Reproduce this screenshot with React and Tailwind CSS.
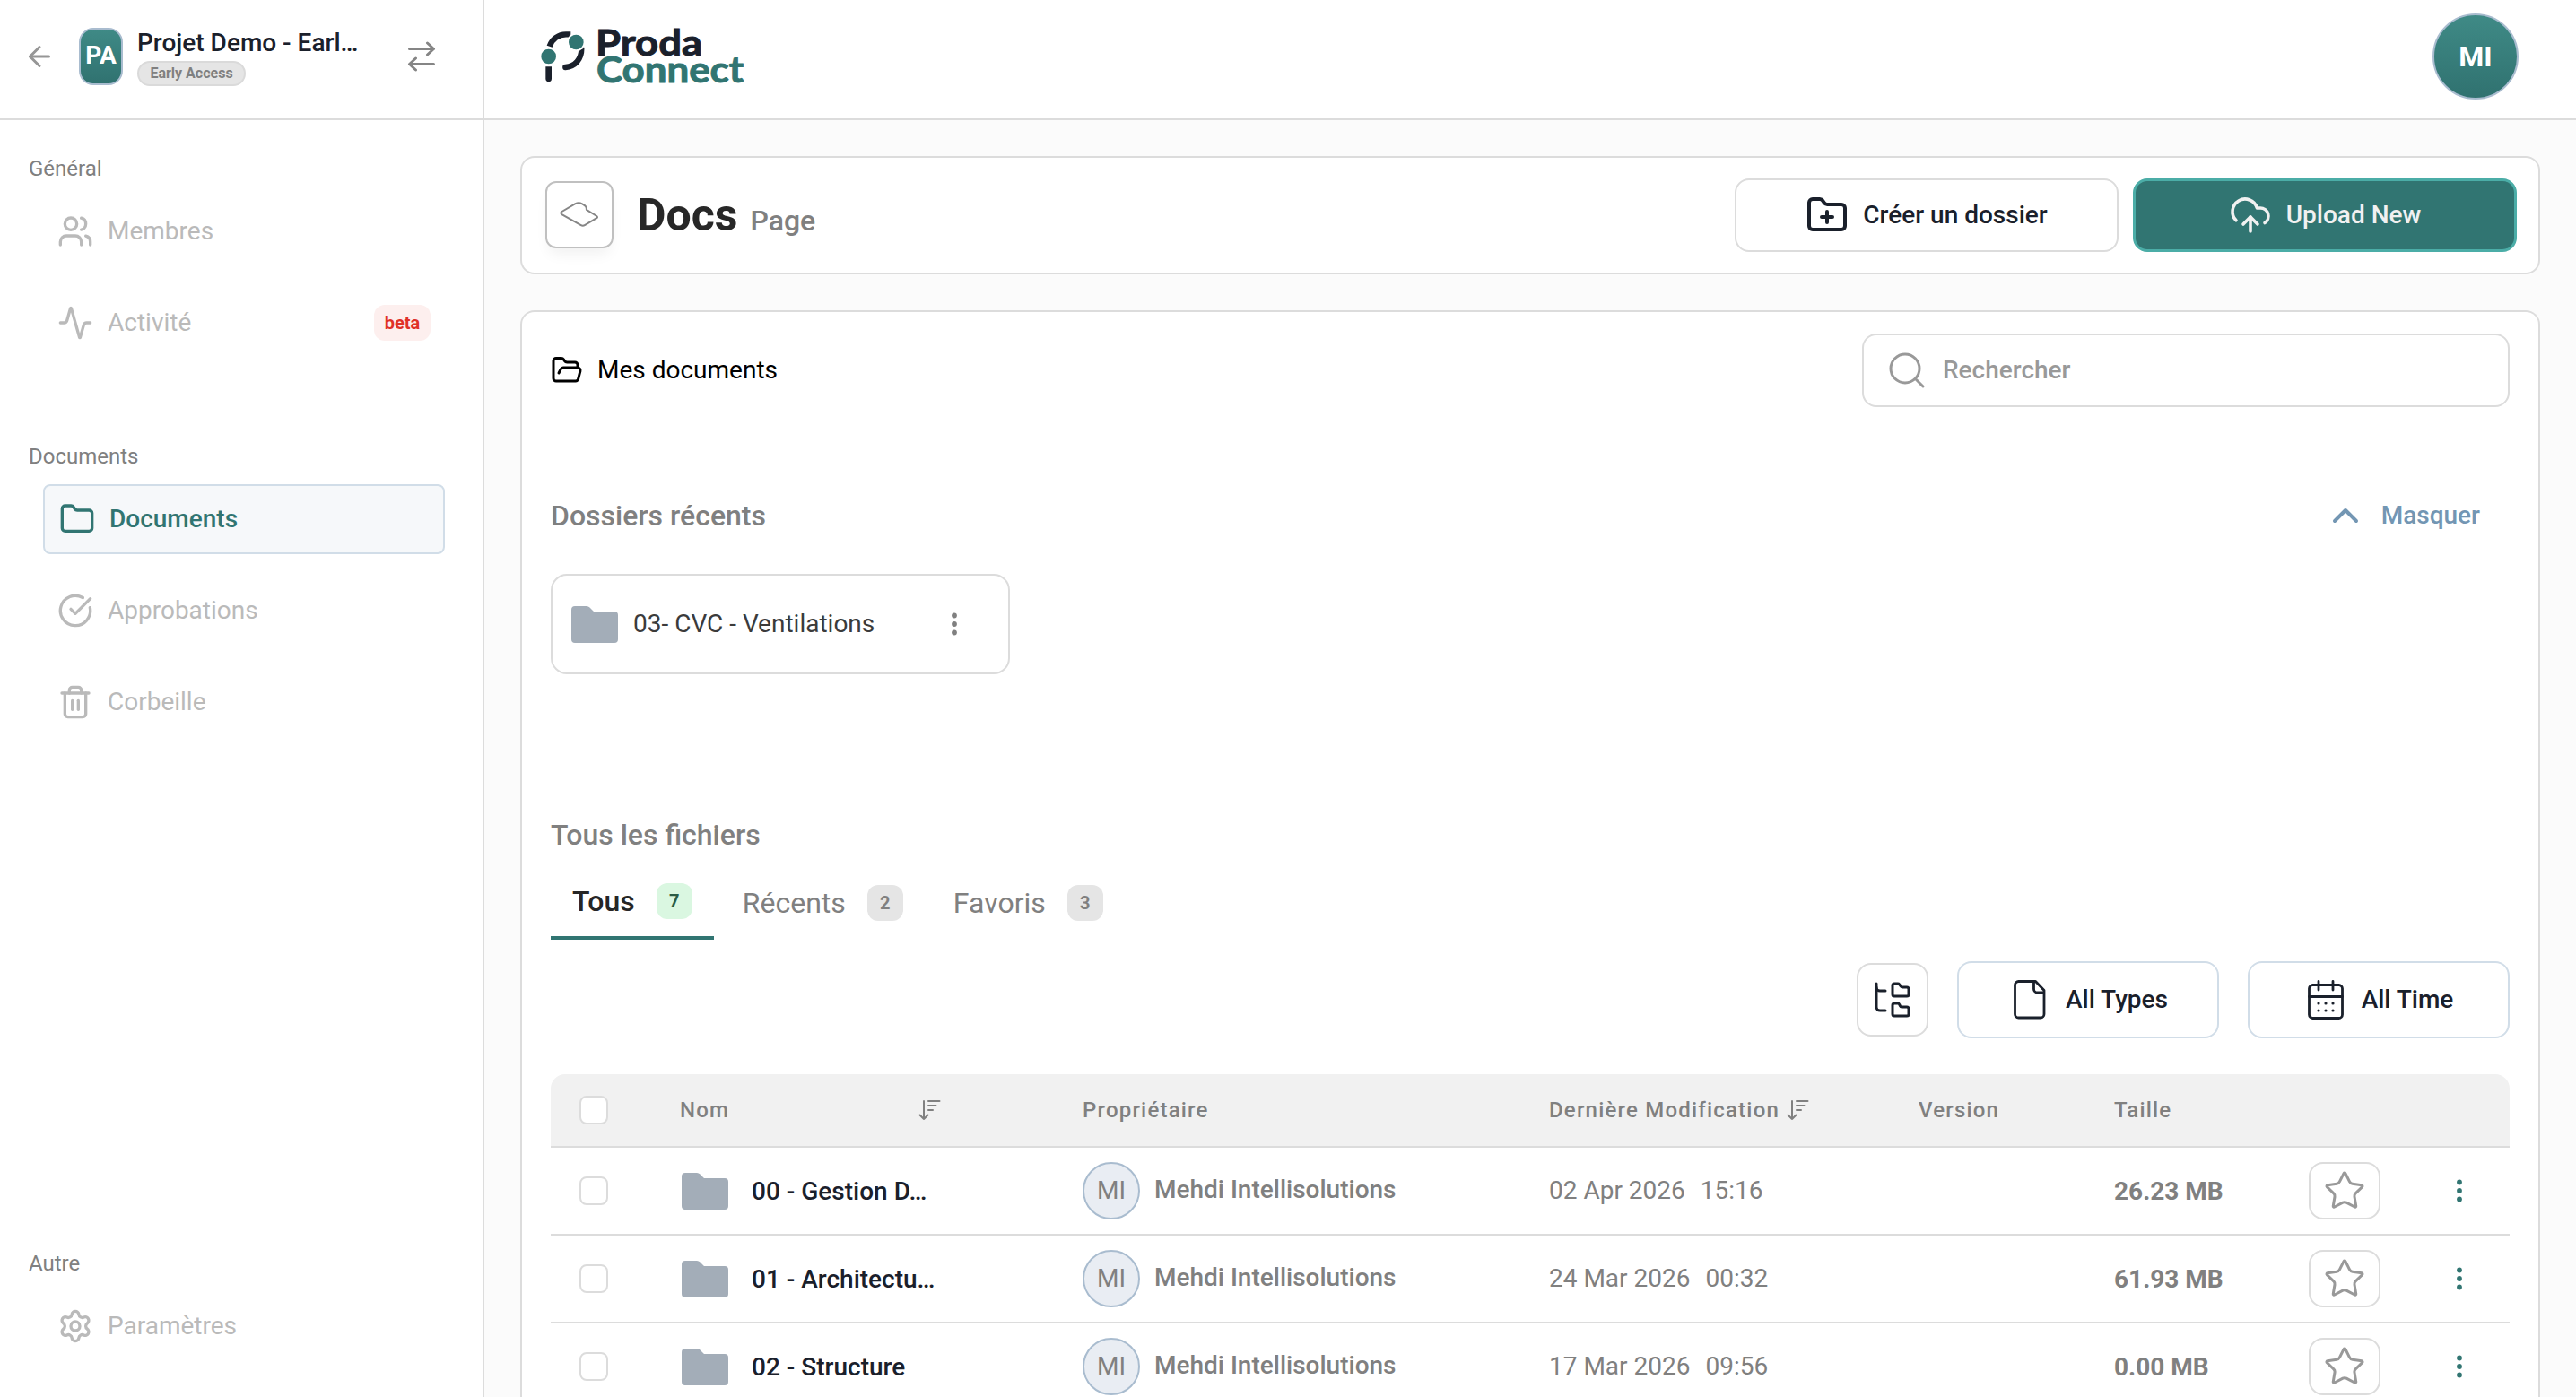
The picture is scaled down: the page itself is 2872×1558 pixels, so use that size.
import { useState } from "react";
import {
  Activity,
  ArrowLeft,
  ChevronUp,
  CircleCheckBig,
  CloudUpload,
  Folder,
  FolderOpen,
  FolderPlus,
  FolderTree,
  Settings,
  Star,
  Trash2,
  Users,
} from "lucide-react";

const general = [
  { label: "Membres", icon: Users },
  { label: "Activité", icon: Activity, tag: "beta" },
];

const documents = [
  { label: "Documents", icon: Folder },
  { label: "Approbations", icon: CircleCheckBig },
  { label: "Corbeille", icon: Trash2 },
];

const tabs = [
  { id: "all", label: "Tous", count: 7 },
  { id: "recent", label: "Récents", count: 2 },
  { id: "fav", label: "Favoris", count: 3 },
];

const files = [
  { name: "00 - Gestion D…", owner: "Mehdi Intellisolutions", date: "02 Apr 2026", time: "15:16", size: "26.23 MB" },
  { name: "01 - Architectu…", owner: "Mehdi Intellisolutions", date: "24 Mar 2026", time: "00:32", size: "61.93 MB" },
  { name: "02 - Structure", owner: "Mehdi Intellisolutions", date: "17 Mar 2026", time: "09:56", size: "0.00 MB" },
];

const gridCols = "grid grid-cols-[143px_450px_520px_412px_218px_217px_1fr] items-center";

const Logo = () => (
  <svg width="228" height="95" viewBox="0 -45 684 285" className="shrink-0 overflow-visible">
    <g fill="none" stroke="#1a202b" strokeWidth="19">
      <path d="M29 62A58 58 0 0 1 84 22h16" />
      <path d="M136 70C136 106 114 130 82 132" strokeLinecap="round" />
    </g>
    <path d="M16 130h20v40a10 10 0 0 1-20 0z" fill="#1a202b" />
    <circle cx="118" cy="48" r="31" fill="#fff" />
    <circle cx="118" cy="48" r="25" fill="#317572" />
    <circle cx="26" cy="96" r="25" fill="#317572" />
    <g fontFamily="Lato, sans-serif" fontWeight="700" fontSize="123">
      <text x="183" y="94" textLength="357" lengthAdjust="spacingAndGlyphs" fill="#1a202b" stroke="#1a202b" strokeWidth="3">
        Proda
      </text>
      <text x="186" y="184" textLength="492" lengthAdjust="spacingAndGlyphs" fill="#317572" stroke="#317572" strokeWidth="3">
        Connect
      </text>
    </g>
  </svg>
);

const SwapIcon = () => (
  <svg width="32" height="34" viewBox="0 0 32 34" fill="none" stroke="#858585" strokeWidth="3" strokeLinecap="round" strokeLinejoin="round">
    <path d="M2.5 8.5h27M22.5 2l7 6.5-7 6.5" />
    <path d="M29.5 25.5h-27M9.5 19l-7 6.5 7 6.5" />
  </svg>
);

const LayerIcon = () => (
  <svg width="44" height="30" viewBox="0 0 44 30" fill="none" stroke="#868686" strokeWidth="2" strokeLinejoin="round">
    <path d="M2.4 12 17.5 3.2c3-1.6 5-1.3 7.6.2 3.6 2 5 3 4.8 6.4l11.4 7.2c1 .7 1 1.6 0 2.2l-13.4 8c-1.4.8-2.8.8-4.2 0L2.4 15.2c-1.4-1-1.4-2.3 0-3.2z" />
  </svg>
);

const SearchIcon = () => (
  <svg width="48" height="48" viewBox="0 0 48 48" fill="none" stroke="#999" strokeWidth="3" strokeLinecap="round">
    <circle cx="22" cy="22" r="16" />
    <path d="m34.5 34.5 7.500 7.500" />
  </svg>
);

const FileIcon = () => (
  <svg width="48" height="48" viewBox="0 0 48 48" fill="none" stroke="#1a202b" strokeWidth="2.8" strokeLinejoin="round">
    <path d="M11.5 3.5h19l9.5 10V40a4 4 0 0 1-4 4H11.5a4 4 0 0 1-4-4V7.5a4 4 0 0 1 4-4z" />
    <path d="M28.5 3.5V12a4 4 0 0 0 4 4H40" />
  </svg>
);

const CalendarIcon = () => (
  <svg width="48" height="48" viewBox="0 0 48 48" fill="none" stroke="#1a202b" strokeWidth="2.8" strokeLinecap="round">
    <rect x="5.5" y="7.5" width="37" height="37" rx="4" />
    <path d="M5.5 20.5h37M16 3.5V13M32 3.5V13" />
    <path d="M16 28h.01M24 28h.01M32 28h.01M16 36h.01M24 36h.01M32 36h.01" strokeWidth="3.2" />
  </svg>
);

const SortIcon = () => (
  <svg width="26" height="24" viewBox="0 0 26 24" fill="none" stroke="#808080" strokeWidth="2" strokeLinecap="round" strokeLinejoin="round">
    <path d="M7 2v20M2.5 17.5 7 22l4.5-4.5" />
    <path d="M12 2h12.500M12 7h8.500M12 12h5" />
  </svg>
);

const FolderSolid = () => (
  <svg width="52" height="41" viewBox="0 0 52 41" fill="#a3adb8" className="shrink-0">
    <path d="M4 0h13a5 5 0 0 1 3.5 1.5L25 6h23a4 4 0 0 1 4 4v27a4 4 0 0 1-4 4H4a4 4 0 0 1-4-4V4a4 4 0 0 1 4-4z" />
  </svg>
);

const Dots = ({ color }) => (
  <svg width="8" height="28" viewBox="0 0 8 28" fill={color}>
    <circle cx="4" cy="4.5" r="2.9" />
    <circle cx="4" cy="14" r="2.9" />
    <circle cx="4" cy="23.5" r="2.9" />
  </svg>
);

const NavItem = ({ item, active }) => {
  const Icon = item.icon;
  return (
    <button
      className={
        active
          ? "flex h-[78px] items-center gap-4 rounded-lg border-2 border-[#d1dde8] bg-[#f6f8fa] px-4 font-medium text-[#317572]"
          : "flex h-[78px] items-center gap-4 px-4 text-[#bababa]"
      }
    >
      <Icon size={40} strokeWidth={2} />
      <span>{item.label}</span>
      {item.tag && (
        <span className="ml-auto flex h-10 w-[63px] items-center justify-center rounded-xl bg-[#fdefee] text-[20px] font-bold text-[#e03127]">
          {item.tag}
        </span>
      )}
    </button>
  );
};

const NavGroup = ({ title, items, active }) => (
  <div>
    <p className="h-8 pl-8 text-[24px] leading-8 text-[#808080]">{title}</p>
    <nav className="mt-[15px] ml-12 flex w-[448px] flex-col gap-6">
      {items.map((item) => (
        <NavItem key={item.label} item={item} active={item.label === active} />
      ))}
    </nav>
  </div>
);

const Sidebar = () => (
  <aside className="flex w-[540px] shrink-0 flex-col border-r-2 border-[#dcdcdc] bg-white">
    <div className="flex h-[134px] shrink-0 items-center border-b-2 border-[#dcdcdc] pb-[6px] pl-[26px]">
      <ArrowLeft size={36} className="text-[#969696]" />
      <div className="ml-[26px] flex h-16 w-[49px] items-center justify-center rounded-2xl border-2 border-[#a9bccf] bg-linear-to-b from-[#3f8a86] to-[#307270] pb-[2px] font-bold text-white">
        PA
      </div>
      <div className="ml-4 w-[284px]">
        <p className="h-[37px] text-[28px] leading-[34px] font-medium text-[#1a202b]">Projet Demo - Earl…</p>
        <span className="flex h-7 w-[121px] items-center justify-center rounded-full border-2 border-[#dadada] bg-[#e5e5e5] text-[16px] font-bold text-[#808080]">
          Early Access
        </span>
      </div>
      <div className="ml-[17px]">
        <SwapIcon />
      </div>
    </div>
    <div className="flex flex-1 flex-col pt-[38px]">
      <NavGroup title="Général" items={general} />
      <div className="mt-[94px]">
        <NavGroup title="Documents" items={documents} active="Documents" />
      </div>
      <div className="mt-auto mb-10">
        <NavGroup title="Autre" items={[{ label: "Paramètres", icon: Settings }]} />
      </div>
    </div>
  </aside>
);

const Checkbox = () => <span className="ml-8 block h-8 w-8 rounded-lg border-2 border-[#dcdcdc] bg-white" />;

const FileRow = ({ file }) => (
  <div className={`${gridCols} h-[98px] shrink-0 border-b-2 border-[#dcdcdc]`}>
    <Checkbox />
    <div className="flex items-center gap-[26px] pl-[3px]">
      <FolderSolid />
      <span className="pt-px font-medium text-[#1a202b]">{file.name}</span>
    </div>
    <div className="flex items-center gap-4">
      <span className="flex h-16 w-16 items-center justify-center rounded-full border-2 border-[#a9bccf] bg-[#e9edf3]">MI</span>
      <span className="pb-[3px] font-medium">{file.owner}</span>
    </div>
    <div className="flex gap-[17px]">
      <span>{file.date}</span>
      <span>{file.time}</span>
    </div>
    <span />
    <span className="pt-px font-bold">{file.size}</span>
    <div className="flex items-center">
      <button className="flex h-16 w-20 items-center justify-center rounded-2xl border-2 border-[#dcdcdc]">
        <Star size={48} strokeWidth={1.5} className="text-[#999]" />
      </button>
      <span className="ml-[84px]">
        <Dots color="#317572" />
      </span>
    </div>
  </div>
);

const App = () => {
  const [tab, setTab] = useState("all");

  return (
    <div className="flex h-screen overflow-hidden bg-[#fbfbfb] font-['Roboto',sans-serif] text-[28px] leading-9 text-[#808080]">
      <Sidebar />

      <div className="flex min-w-0 flex-1 flex-col">
        <header className="flex h-[134px] shrink-0 items-center justify-between border-b-2 border-[#dcdcdc] bg-white pr-16 pb-[6px] pl-[63px]">
          <Logo />
          <div className="flex h-24 w-24 items-center justify-center rounded-full border-2 border-[#a9bccf] bg-linear-to-b from-[#3f8a86] to-[#307270] text-[32px] font-bold text-white">
            MI
          </div>
        </header>

        <main className="flex min-h-0 flex-1 flex-col gap-10 px-10 pt-10">
          <section className="flex h-[132px] shrink-0 items-center justify-between rounded-2xl border-2 border-[#dcdcdc] bg-white pr-6 pl-[26px]">
            <div className="flex items-center pb-[2px]">
              <div className="flex h-[75px] w-[76px] items-center justify-center rounded-xl border-2 border-[#c0c0c0] bg-white shadow-[0_10px_16px_-4px_rgba(0,0,0,0.06)]">
                <LayerIcon />
              </div>
              <div className="flex items-baseline gap-[14px] pt-[2px] pl-[26px]">
                <h1 className="text-[50px] leading-[56px] font-bold text-[#282828]">Docs</h1>
                <span className="text-[32px] font-medium">Page</span>
              </div>
            </div>
            <div className="flex gap-4 font-medium">
              <button className="flex h-[82px] w-[428px] items-center justify-center gap-4 rounded-2xl border-2 border-[#dcdcdc] text-[#1a202b]">
                <FolderPlus size={48} />
                Créer un dossier
              </button>
              <button className="flex h-[82px] w-[428px] items-center justify-center gap-4 rounded-2xl border-3 border-[#4bada7] bg-[#317572] text-[#f1f1f1]">
                <CloudUpload size={48} strokeWidth={1.8} />
                Upload New
              </button>
            </div>
          </section>

          <section className="flex min-h-0 flex-1 flex-col rounded-t-2xl border-2 border-b-0 border-[#dcdcdc] bg-white px-8 pt-6">
            <div className="flex h-[82px] shrink-0 items-center justify-between">
              <div className="flex items-center gap-4 text-black">
                <FolderOpen size={36} />
                <span>Mes documents</span>
              </div>
              <div className="flex h-[82px] w-[722px] items-center gap-4 rounded-2xl border-2 border-[#dcdcdc] pl-6 font-medium text-[#999]">
                <SearchIcon />
                Rechercher
              </div>
            </div>

            <div className="mt-[97px] flex h-12 shrink-0 items-center justify-between pr-[33px] font-medium">
              <h2 className="text-[32px]">Dossiers récents</h2>
              <button className="flex items-center gap-4 text-[#7396b3]">
                <ChevronUp size={48} />
                Masquer
              </button>
            </div>

            <div className="mt-[41px] flex h-28 w-[512px] shrink-0 items-center rounded-[18px] border-2 border-[#dcdcdc] pl-[21px]">
              <FolderSolid />
              <span className="ml-[17px] w-[354px] text-[#3b3b3b]">03- CVC - Ventilations</span>
              <Dots color="#808080" />
            </div>

            <h2 className="mt-[161px] h-9 shrink-0 text-[32px] font-medium">Tous les fichiers</h2>

            <div className="mt-[17px] flex h-[82px] shrink-0 gap-2 text-[32px]">
              {tabs.map((t) => (
                <button
                  key={t.id}
                  onClick={() => setTab(t.id)}
                  className={
                    t.id === tab
                      ? "flex items-center gap-6 border-b-4 border-[#317572] px-6 font-medium text-[#262626]"
                      : "flex items-center gap-6 px-6"
                  }
                >
                  {t.label}
                  <span
                    className={
                      t.id === tab
                        ? "flex h-10 w-10 items-center justify-center rounded-xl bg-[#daf7e1] text-[20px] font-bold text-[#2b5c45]"
                        : "flex h-10 w-10 items-center justify-center rounded-xl bg-[#e5e5e5] text-[20px] font-bold text-[#808080]"
                    }
                  >
                    {t.count}
                  </span>
                </button>
              ))}
            </div>

            <div className="mt-6 flex h-[86px] shrink-0 items-center justify-end gap-8 font-medium text-[#1a202b]">
              <button className="flex h-[82px] w-20 items-center justify-center rounded-2xl border-2 border-[#dcdcdc]">
                <FolderTree size={48} strokeWidth={1.5} />
              </button>
              <button className="flex h-[86px] w-[292px] items-center justify-center gap-4 rounded-2xl border-2 border-[#d1dde8]">
                <FileIcon />
                All Types
              </button>
              <button className="flex h-[86px] w-[292px] items-center justify-center gap-4 rounded-2xl border-2 border-[#d1dde8]">
                <CalendarIcon />
                All Time
              </button>
            </div>

            <div className="mt-10 flex flex-col">
              <div className={`${gridCols} h-[82px] shrink-0 rounded-t-2xl border-b-2 border-[#dcdcdc] bg-[#f1f1f1] text-[24px] font-medium tracking-[1.2px]`}>
                <Checkbox />
                <div className="flex items-center">
                  <span className="w-[266px] pl-px">Nom</span>
                  <SortIcon />
                </div>
                <span>Propriétaire</span>
                <div className="flex items-center gap-[7px]">
                  Dernière Modification
                  <SortIcon />
                </div>
                <span>Version</span>
                <span>Taille</span>
                <span />
              </div>
              {files.map((file) => (
                <FileRow key={file.name} file={file} />
              ))}
            </div>
          </section>
        </main>
      </div>
    </div>
  );
};

export default App;
